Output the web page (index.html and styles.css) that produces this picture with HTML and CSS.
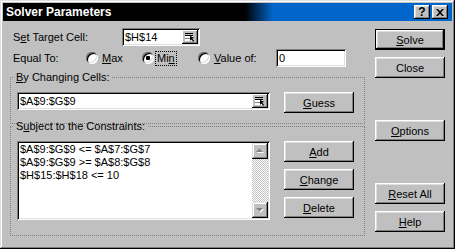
FILE: index.html
```html
<!DOCTYPE html>
<html lang="en">
<head>
  <meta charset="UTF-8"/>
  <title>Solver Parameters</title>
  <link rel="stylesheet" href="styles.css">
</head>
<body>

  <div class="window">
    <div class="titlebar">
      <span class="title">Solver Parameters</span>
      <div class="title-buttons">
        <span class="tbtn">?</span>
        <span class="tbtn">
          <svg width="8" height="7" viewBox="0 0 8 7">
            <path d="M0 0h2l2 2.2L6 0h2L5 3.5 8 7H6L4 4.8 2 7H0l3-3.5z" fill="#000"/>
          </svg>
        </span>
      </div>
    </div>

    <div class="content">
      <div class="main">
        <div class="row">
          <span class="label label-target">S<u>e</u>t Target Cell:</span>
          <div class="field field-target">
            <span class="field-text">$H$14</span>
            <span class="refedit">
              <svg width="16" height="14" viewBox="0 0 16 14">
                <rect x="3" y="3" width="8" height="1" fill="#000"/>
                <rect x="3" y="5" width="8" height="1" fill="#000"/>
                <rect x="3" y="6" width="8" height="5" fill="#fff"/>
                <rect x="3" y="8" width="5" height="1" fill="#808080"/>
                <path d="M8 6v5l1.4-1.4 1.8 2.2 1-0.9-1.8-2.2L12 7.6z" fill="#000"/>
              </svg>
            </span>
          </div>
        </div>

        <div class="row row-equal">
          <span class="label label-equal">Equal To:</span>
          <span class="option">
            <span class="radio"></span>
            <span><u>M</u>ax</span>
          </span>
          <span class="option">
            <span class="radio checked"></span>
            <span class="focus">Mi<u>n</u></span>
          </span>
          <span class="option option-value">
            <span class="radio"></span>
            <span><u>V</u>alue of:</span>
          </span>
          <div class="field field-value">
            <span class="field-text">0</span>
          </div>
        </div>

        <fieldset class="group group-changing">
          <legend><u>B</u>y Changing Cells:</legend>
          <div class="group-body">
            <div class="field field-changing">
              <span class="field-text">$A$9:$G$9</span>
              <span class="refedit">
                <svg width="16" height="14" viewBox="0 0 16 14">
                  <rect x="3" y="3" width="8" height="1" fill="#000"/>
                  <rect x="3" y="5" width="8" height="1" fill="#000"/>
                  <rect x="3" y="6" width="8" height="5" fill="#fff"/>
                  <rect x="3" y="8" width="5" height="1" fill="#808080"/>
                  <path d="M8 6v5l1.4-1.4 1.8 2.2 1-0.9-1.8-2.2L12 7.6z" fill="#000"/>
                </svg>
              </span>
            </div>
            <div class="btn-col">
              <button class="btn"><u>G</u>uess</button>
            </div>
          </div>
        </fieldset>

        <fieldset class="group group-constraints">
          <legend>S<u>u</u>bject to the Constraints:</legend>
          <div class="group-body">
            <div class="listbox">
              <div class="list-items">
                <div>$A$9:$G$9 &lt;= $A$7:$G$7</div>
                <div>$A$9:$G$9 &gt;= $A$8:$G$8</div>
                <div>$H$15:$H$18 &lt;= 10</div>
              </div>
              <div class="scrollbar">
                <span class="scroll-btn">
                  <svg width="16" height="16" viewBox="0 0 16 16">
                    <path d="M5 10h7l-3.5-3.5z" fill="#fff"/>
                    <path d="M4 9h7L7.5 5.5z" fill="#808080"/>
                  </svg>
                </span>
                <span class="scroll-track"></span>
                <span class="scroll-btn">
                  <svg width="16" height="16" viewBox="0 0 16 16">
                    <path d="M5 7h7l-3.5 3.5z" fill="#fff"/>
                    <path d="M4 6h7L7.5 9.5z" fill="#808080"/>
                  </svg>
                </span>
              </div>
            </div>
            <div class="btn-col">
              <button class="btn"><u>A</u>dd</button>
              <button class="btn"><u>C</u>hange</button>
              <button class="btn"><u>D</u>elete</button>
            </div>
          </div>
        </fieldset>
      </div>

      <div class="side">
        <button class="btn btn-default"><u>S</u>olve</button>
        <button class="btn">Close</button>
        <button class="btn btn-spaced"><u>O</u>ptions</button>
        <button class="btn btn-spaced"><u>R</u>eset All</button>
        <button class="btn"><u>H</u>elp</button>
      </div>
    </div>
  </div>

</body>
</html>
```

FILE: styles.css
```css
* {
  box-sizing: border-box;
  margin: 0;
  padding: 0;
}

body {
  background: #c0c0c0;
  font-family: "Liberation Sans", Arial, sans-serif;
  font-size: 11px;
  color: #000;
}

.window {
  width: 455px;
  height: 249px;
  padding: 3px;
  background: #c0c0c0;
  box-shadow: inset -1px -1px #000, inset 1px 1px #dfdfdf,
              inset -2px -2px #808080, inset 2px 2px #fff;
}

/* title bar */
.titlebar {
  height: 18px;
  display: flex;
  align-items: center;
  justify-content: space-between;
  padding: 0 4px 0 3px;
  background: linear-gradient(to right, #000 242px, #0066cc 270px);
  color: #fff;
}

.title {
  font-size: 12px;
  font-weight: bold;
}

.title-buttons {
  display: flex;
  gap: 2px;
}

.tbtn {
  width: 16px;
  height: 14px;
  display: flex;
  align-items: center;
  justify-content: center;
  background: #c0c0c0;
  color: #000;
  font-size: 12px;
  font-weight: bold;
  box-shadow: inset -1px -1px #000, inset 1px 1px #fff,
              inset -2px -2px #808080, inset 2px 2px #dfdfdf;
}

/* dialog body */
.content {
  display: flex;
  padding: 7px 0 0 7px;
}

.main {
  width: 355px;
}

.row {
  display: flex;
  align-items: center;
  height: 18px;
  padding-left: 3px;
}

.row-equal {
  margin-top: 3px;
}

.label-target {
  width: 109px;
}

.label-equal {
  width: 73px;
}

.field {
  display: flex;
  align-items: center;
  height: 18px;
  padding: 2px 2px 2px 3px;
  background: #fff;
  box-shadow: inset 1px 1px #808080, inset -1px -1px #fff,
              inset 2px 2px #000, inset -2px -2px #dfdfdf;
}

.field-text {
  flex: 1;
  white-space: nowrap;
}

.field-target {
  width: 78px;
}

.field-value {
  width: 70px;
}

.field-changing {
  width: 253px;
}

.refedit {
  display: flex;
  width: 16px;
  height: 14px;
  background: #c0c0c0;
  box-shadow: inset -1px -1px #000, inset 1px 1px #fff,
              inset -2px -2px #808080;
}

.option {
  display: flex;
  align-items: center;
  width: 56px;
}

.option-value {
  width: 78px;
}

.radio {
  width: 12px;
  height: 12px;
  margin-right: 4px;
  border-radius: 50%;
  background: #fff;
  box-shadow: inset 1px 1px #808080, inset -1px -1px #fff,
              inset 2px 2px #000, inset -2px -2px #dfdfdf;
}

.radio.checked {
  margin-right: 1px;
  background: radial-gradient(circle at 6px 6px, #000 0 2px, #fff 2.5px);
}

.focus {
  height: 15px;
  line-height: 13px;
  padding: 0 1px;
  border: 1px dotted #000;
}

/* group boxes */
.group {
  border: 1px dotted #808080;
  min-width: 0;
}

.group legend {
  margin-left: -3px;
  padding: 0 2px;
  line-height: 13px;
}

.group-changing {
  margin-top: 4px;
  padding: 8px 10px 10px 6px;
}

.group-constraints {
  margin-top: -4px;
  padding: 8px 10px 15px 6px;
}

.group-body {
  display: flex;
  align-items: flex-start;
  justify-content: space-between;
}

.btn-col {
  display: flex;
  flex-direction: column;
  gap: 7px;
}

/* constraints list */
.listbox {
  display: flex;
  width: 253px;
  height: 79px;
  padding: 2px;
  background: #fff;
  box-shadow: inset 1px 1px #808080, inset -1px -1px #fff,
              inset 2px 2px #000, inset -2px -2px #dfdfdf;
}

.list-items {
  flex: 1;
  padding-left: 1px;
  line-height: 13px;
  white-space: nowrap;
}

.scrollbar {
  display: flex;
  flex-direction: column;
  width: 16px;
  background: repeating-conic-gradient(#c0c0c0 0 25%, #fff 0 50%) 0 0 / 2px 2px;
}

.scroll-btn {
  display: flex;
  width: 16px;
  height: 16px;
  background: #c0c0c0;
  box-shadow: inset -1px -1px #000, inset 1px 1px #dfdfdf,
              inset -2px -2px #808080, inset 2px 2px #fff;
}

.scroll-track {
  flex: 1;
}

/* push buttons */
.btn {
  width: 70px;
  height: 21px;
  border: none;
  background: #c0c0c0;
  font-family: "Liberation Sans", Arial, sans-serif;
  font-size: 11px;
  color: #000;
  box-shadow: inset -1px -1px #000, inset 1px 1px #fff,
              inset -2px -2px #808080, inset 2px 2px #dfdfdf;
}

.btn-default {
  box-shadow: inset 0 0 0 1px #000, inset -2px -2px #000, inset 2px 2px #fff,
              inset -3px -3px #808080, inset 3px 3px #dfdfdf;
}

.side {
  display: flex;
  flex-direction: column;
  gap: 7px;
  margin-left: 10px;
  padding-top: 1px;
}

.btn-spaced {
  margin-top: 35px;
}
```
